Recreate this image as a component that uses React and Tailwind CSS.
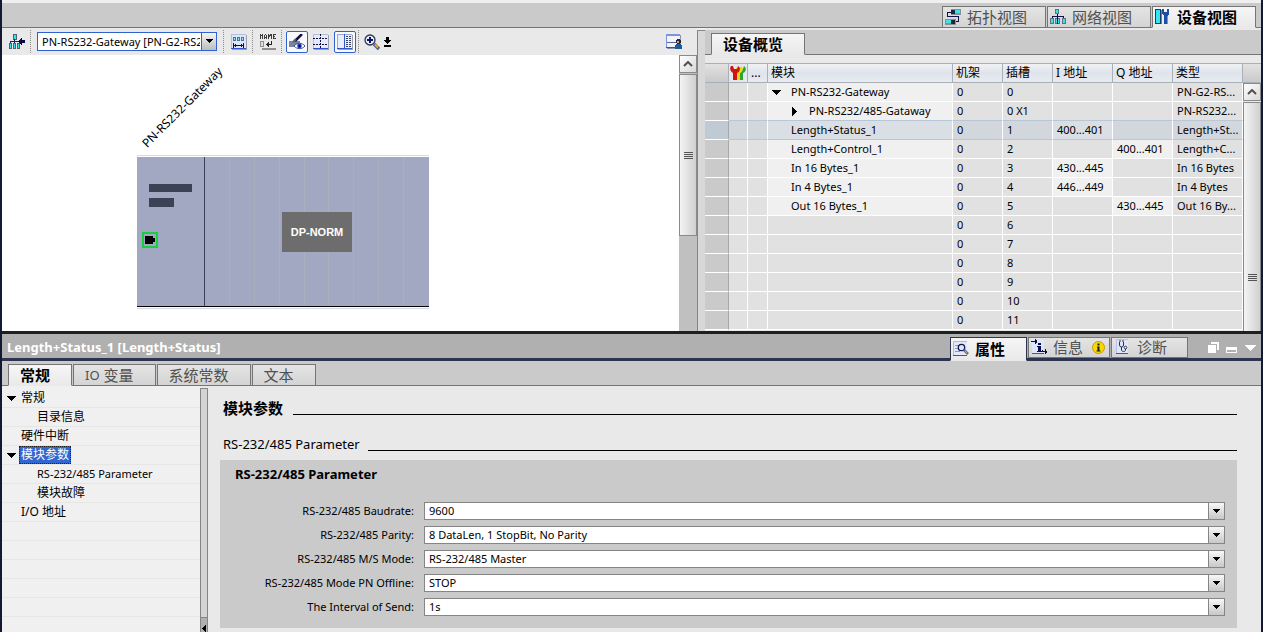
import { useState } from "react";

const devices = [
  { name: "PN-RS232-Gateway", level: 0, open: true, slot: "0", type: "PN-G2-RS..." },
  { name: "PN-RS232/485-Gataway", level: 1, open: false, slot: "0 X1", type: "PN-RS232..." },
  { name: "Length+Status_1", slot: "1", i: "400...401", type: "Length+St..." },
  { name: "Length+Control_1", slot: "2", q: "400...401", type: "Length+C..." },
  { name: "In 16 Bytes_1", slot: "3", i: "430...445", type: "In 16 Bytes" },
  { name: "In 4 Bytes_1", slot: "4", i: "446...449", type: "In 4 Bytes" },
  { name: "Out 16 Bytes_1", slot: "5", q: "430...445", type: "Out 16 By..." },
  { slot: "6" },
  { slot: "7" },
  { slot: "8" },
  { slot: "9" },
  { slot: "10" },
  { slot: "11" },
];

const treeItems = [
  { label: "常规", open: true },
  { label: "目录信息", child: true },
  { label: "硬件中断" },
  { label: "模块参数", open: true },
  { label: "RS-232/485 Parameter", child: true, latin: true },
  { label: "模块故障", child: true },
  { label: "I/O 地址" },
];

const fields = [
  { id: "baudrate", label: "RS-232/485 Baudrate:", options: ["9600", "19200", "38400"] },
  { id: "parity", label: "RS-232/485 Parity:", options: ["8 DataLen, 1 StopBit, No Parity"] },
  { id: "mode", label: "RS-232/485 M/S Mode:", options: ["RS-232/485 Master", "RS-232/485 Slave"] },
  { id: "offline", label: "RS-232/485 Mode PN Offline:", options: ["STOP", "RUN"] },
  { id: "interval", label: "The Interval of Send:", options: ["1s", "2s"] },
];

/* ---------- icons ---------- */

const Svg = ({ w = 16, h = 16, children }) => (
  <svg width={w} height={h} viewBox={`0 0 ${w} ${h}`} className="block shrink-0" shapeRendering="crispEdges" aria-hidden="true">
    {children}
  </svg>
);

const TopologyIcon = () => (
  <Svg>
    <path d="M6 0h10v6H6z" fill="#8a9097" />
    <path d="M6 1h4v4H6z" fill="#1c2b38" />
    <path d="M10 1h5v3h-5z" fill="#3fe0e8" />
    <path d="M0 10h11v6H0z" fill="#8a9097" />
    <path d="M1 11h5v3H1z" fill="#3fe0e8" />
    <path d="M6 11h4v4H6z" fill="#1c2b38" />
    <path d="M2 3h4v1H3v3h11v6h-3v-1h2V8H2z" fill="#12124a" />
  </Svg>
);

const NetworkIcon = () => (
  <Svg>
    <path d="M5 0h4v5H5z" fill="#5d7285" />
    <path d="M6 1h2v3H6z" fill="#3fe0e8" />
    <path d="M7 5h1v5H7zM2 7h12v1H2zM2 7h1v3H2zM13 7h1v3h-1z" fill="#10104a" />
    <path d="M0 9h4v6H0zM5 9h5v6H5zM12 9h4v6h-4z" fill="#5d7285" />
    <path d="M1 10h2v4H1zM6 10h3v4H6zM13 10h2v4h-2z" fill="#3fe0e8" />
    <path d="M7 8h1v7H7z" fill="#10104a" />
  </Svg>
);

const DeviceIcon = () => (
  <Svg>
    <path d="M0 0h6v15H0z" fill="#1b3b6e" />
    <path d="M1 1h4v13H1z" fill="#34e5ee" />
    <path d="M6 1h1v14H6z" fill="#71808f" />
    <path d="M7 0h2v3h3V0h2v5l-2 2v8H9V7L7 5z" fill="#1d4fa8" />
    <path d="M12 7h1v8h-1z" fill="#8094b8" />
  </Svg>
);

const GotoNetworkIcon = () => (
  <Svg>
    <path d="M4 0h4v6H4zM0 9h3v6H0zM4 9h3v6H4zM8 9h3v6H8z" fill="#4d6275" />
    <path d="M5 1h2v4H5zM1 10h1v4H1zM5 10h1v4H5zM9 10h1v4H9z" fill="#3fe0e8" />
    <path d="M1 7h9v1H1zM5 5h1v4H5zM1 7h1v2H1z" fill="#20205a" />
    <path d="M16 6v3h-3v2h-1v-1h-1V9h-1V8H9V7h1V6h1V5h1V4h1v2z" fill="#0a0a4a" />
  </Svg>
);

const AddressIcon = () => (
  <Svg>
    <path d="M1 1h15v15H1z" fill="#9a9fb0" />
    <path d="M0 0h15v14H0z" fill="#dfe5f7" />
    <path d="M0 0h15v1H0zM0 0h1v14H0z" fill="#b3bddd" />
    <path d="M0 14h15v1H0z" fill="#3456cc" />
    <path d="M2 3h3v4H2zM6 3h3v4H6zM10 3h3v4h-3z" fill="#56708c" />
    <path d="M3 4h1v2H3zM7 4h1v2H7zM11 4h1v2h-1z" fill="#7cf0f5" />
    <path d="M3 11h9v1H3zM2 9h1v5H2zM4 10h1v3H4zM12 9h1v5h-1zM10 10h1v3h-1z" fill="#101040" />
  </Svg>
);

const NameIcon = () => (
  <Svg w={17}>
    <path
      d="M0 0h1v5H0zM1 1h1v1H1zM2 0h1v5H2zM4 1h1v4H4zM5 0h1v1H5zM6 1h1v4H6zM5 3h1v1H5zM8 0h1v5H8zM9 1h1v2H9zM10 0h1v2h-1zM11 0h1v5h-1zM13 0h1v5h-1zM14 0h2v1h-2zM14 2h1v1h-1zM14 4h2v1h-2z"
      fill="#3c3c3c"
    />
    <path d="M0 7h4v6H0zM2 14h14v2H2z" fill="#909090" />
    <path d="M1 8h2v4H1z" fill="#e0e0e0" />
    <path d="M11 7h1v4h-1zM6 10h6v1H6zM7 9h1v3H7zM8 8h1v5H8z" fill="#222" />
  </Svg>
);

const LabelEyeIcon = () => (
  <svg width="16" height="16" viewBox="0 0 16 16" className="block" aria-hidden="true">
    <path d="M0 7h11v6H0z" fill="#7c8298" />
    <path d="M6 7L13 0" stroke="#101045" strokeWidth="2.500" />
    <path d="M4 8L7 5" stroke="#5a5f70" strokeWidth="2" />
    <path d="M5 12c3-3.500 8-3.500 11 0c-3 3.500-8 3.500-11 0z" fill="#fff" stroke="#3d4f9c" />
    <circle cx="10.500" cy="12" r="2.300" fill="#1737c4" />
    <circle cx="10.500" cy="12" r="1" fill="#050520" />
  </svg>
);

const GridIcon = () => (
  <Svg>
    <path d="M1 1h15v15H1z" fill="#9a9fb0" />
    <path d="M0 0h15v14H0z" fill="#e6ebfa" />
    <path d="M0 0h15v1H0zM0 0h1v14H0z" fill="#b3bddd" />
    <path d="M0 14h15v1H0z" fill="#3456cc" />
    <path d="M0 4.500h15M0 10.500h15M7.500 0v15" stroke="#101040" strokeDasharray="2 1" />
  </Svg>
);

const TablePaneIcon = () => (
  <Svg>
    <path d="M1 1h15v15H1z" fill="#9a9fb0" />
    <path d="M0 0h15v14H0z" fill="#e9eefb" />
    <path d="M0 0h15v1H0zM0 0h1v14H0z" fill="#9aa8dc" />
    <path d="M0 14h15v1H0zM7 0h1v15H7z" fill="#3456cc" />
    <path d="M9 2h2v1H9zM9 4h2v1H9zM9 6h2v1H9zM9 8h2v1H9zM9 10h2v1H9zM9 12h2v1H9zM12 2h2v1h-2zM12 4h2v1h-2zM12 6h2v1h-2zM12 8h2v1h-2zM12 10h2v1h-2zM12 12h2v1h-2z" fill="#3a4060" />
  </Svg>
);

const ZoomIcon = () => (
  <svg width="16" height="16" viewBox="0 0 16 16" className="block" aria-hidden="true">
    <circle cx="6" cy="6" r="5" fill="#e4eefc" stroke="#2b3358" strokeWidth="1.300" />
    <path d="M6 3v6M3 6h6" stroke="#101060" strokeWidth="2" />
    <path d="M10 10l5 5" stroke="#4b6384" strokeWidth="3.500" />
    <path d="M11 10.500l3 3" stroke="#e8a93a" strokeWidth="2" />
  </svg>
);

const FitIcon = () => (
  <Svg w={7} h={10}>
    <path d="M2 0h3v3h2v1H6v1H5v1H4v1H3V6H2V5H1V4H0V3h2zM0 8h7v2H0z" fill="#000" />
  </Svg>
);

const UserLayoutIcon = () => (
  <Svg>
    <path d="M1 1h14v14H1z" fill="#8d94b0" />
    <path d="M0 0h14v13H0z" fill="#f0f3fc" />
    <path d="M0 0h14v2H0zM0 0h1v13H0z" fill="#7f93e0" />
    <path d="M0 13h14v1H0z" fill="#3450c0" />
    <path d="M1 8h9v1H1z" fill="#5c6690" />
    <path d="M11 5h3v1h1v3h-1v1h-3V9h-1V6h1z" fill="#2a2430" />
    <path d="M11 7h2v2h-2z" fill="#dba36f" />
    <path d="M10 10h5v1h1v4H9v-4h1z" fill="#1d5a9c" />
  </Svg>
);

const WrenchesIcon = () => (
  <svg width="16" height="16" viewBox="0 0 16 16" className="block" aria-hidden="true">
    <path d="M9 2l2 2h2l1-3c3 2 2 6-1 7v7H9z" fill="#28a828" />
    <path d="M6 2l2 2h2l1-3c3 2 2 6-1 7v7H6z" fill="#f5d21a" />
    <path d="M1 1c-2 3 0 6 2 7v7h4V8c3-1 4-5 1-7L7 4H4L3 1z" fill="#d01414" />
  </svg>
);

const PropertiesIcon = () => (
  <svg width="16" height="16" viewBox="0 0 16 16" className="block" aria-hidden="true">
    <path d="M0 0h14v14H0z" fill="#e3e9fa" />
    <path d="M.5 14V.5H14" fill="none" stroke="#aab6e6" />
    <path d="M0 14.500h14" stroke="#3456cc" />
    <path d="M2 4.500h4M2 7.500h4M2 10.500h5" stroke="#8f98b8" />
    <circle cx="8.500" cy="6.500" r="3.200" fill="#dde8fb" stroke="#161650" strokeWidth="1.300" />
    <path d="M11 9l4 4" stroke="#55709a" strokeWidth="2.500" />
    <path d="M12 10l2 2" stroke="#e3b050" />
  </svg>
);

const InfoIcon = () => (
  <Svg>
    <path d="M1 0h12v14H1z" fill="#dfe6fa" />
    <path d="M1 14h12v1H1z" fill="#3456cc" />
    <path d="M0 2h4V0h1v1h1v3H5v1H4V3H0zM7 4h3v2H7zM6 7h4v5h1v1H6v-1h1V8H6zM11 11h1v1h2v-2h1v2h1v2h-1v1h-1v-2h-3z" fill="#0c0c50" />
  </Svg>
);

const DiagnosticsIcon = () => (
  <svg width="13" height="16" viewBox="0 0 13 16" className="block" aria-hidden="true">
    <path d="M0 0h12v14H0z" fill="#dfe6fa" />
    <path d="M.5 14V.5H12" fill="none" stroke="#b4c0ea" />
    <path d="M0 14.500h12" stroke="#3456cc" />
    <path d="M3.500 3v3a2 2 0 0 0 4 0V3M5.500 8v3c0 2 4 2 4 0V9.500" fill="none" stroke="#2a2f52" />
    <circle cx="9.500" cy="8.500" r="1.300" fill="#fff" stroke="#2a2f52" />
    <path d="M3 2h2M6 2h2" stroke="#2a2f52" />
  </svg>
);

const InfoBadge = () => (
  <svg width="13" height="13" viewBox="0 0 13 13" className="block shrink-0" aria-hidden="true">
    <circle cx="6.500" cy="6.500" r="6" fill="#f8d800" stroke="#c79a00" />
    <path d="M5.500 2.500h2v2h-2zM5 5.500h2.500v4H8.500v1H4.500v-1h1v-3H5z" fill="#1c1c1c" />
  </svg>
);

const ArrowDown = ({ w = 9 }) => (
  <Svg w={w} h={5}>
    {w === 9 ? (
      <path d="M0 0h9v1H8v1H7v1H6v1H5v1H4V4H3V3H2V2H1V1H0z" fill="#000" />
    ) : (
      <path d="M0 0h7v1H6v1H5v1H4v1H3V3H2V2H1V1H0z" fill="#000" />
    )}
  </Svg>
);

const ArrowRight = () => (
  <Svg w={5} h={9}>
    <path d="M0 0h1v1h1v1h1v1h1v1h1v1H4v1H3v1H2v1H1v1H0z" fill="#000" />
  </Svg>
);

/* ---------- shared parts ---------- */

const Tab = ({ active, height = "h-[22px]", edge = "border-[#757575]", className = "", children, ...props }) => {
  const look = active
    ? "border-b-[#e9e9e9] bg-linear-to-b from-[#f6f6f6] to-[#e9e9e9] font-bold text-black"
    : "bg-linear-to-b from-[#e4e4e4] to-[#d4d4d4] text-[#505050]";
  return (
    <button type="button" role="tab" aria-selected={!!active} className={`flex items-center border pb-px text-[15px] leading-5 whitespace-nowrap ${height} ${edge} ${look} ${className}`} {...props}>
      {children}
    </button>
  );
};

const Grip = () => (
  <span className="flex w-[9px] flex-col gap-px">
    <i className="h-px bg-[#555]" />
    <i className="h-px bg-[#555]" />
    <i className="h-px bg-[#555]" />
    <i className="h-px bg-[#555]" />
  </span>
);

const ScrollUp = () => (
  <button type="button" aria-label="Scroll up" className="flex h-[18px] w-full shrink-0 items-center justify-center border border-[#8a8a8a] bg-linear-to-br from-white to-[#d8d8d8]">
    <svg width="10" height="6" viewBox="0 0 10 6" aria-hidden="true">
      <path d="M1 5l4-4l4 4" fill="none" stroke="#505050" strokeWidth="2" />
    </svg>
  </button>
);

const Separator = () => <span className="h-[23px] border-l border-dotted border-[#8c8c8c]" />;

const ToolButton = ({ label, pressed, children }) => (
  <button
    type="button"
    aria-label={label}
    aria-pressed={pressed}
    className={`flex h-[22px] w-[22px] shrink-0 items-center justify-center rounded-xs border ${pressed ? "border-[#2f62cf] bg-[#f8f9fd]" : "border-transparent"}`}
  >
    {children}
  </button>
);

/* ---------- panes ---------- */

const Toolbar = () => (
  <div className="flex h-[27px] items-center bg-[#e9e9e9] pl-1">
    <ToolButton label="Network"><GotoNetworkIcon /></ToolButton>
    <div className="ml-[2px] flex"><Separator /></div>
    <div className="relative mx-[6px] w-[180px]">
      <select aria-label="Device" className="block h-[19px] w-full appearance-none overflow-hidden border border-[#2f62cf] bg-white pr-[16px] pl-1 text-[11px] leading-[17px] text-clip">
        <option>PN-RS232-Gateway [PN-G2-RS232]</option>
      </select>
      <span className="pointer-events-none absolute inset-y-px right-px flex w-[15px] items-center justify-center border-l border-[#2f62cf] bg-linear-to-b from-[#f4f4f4] to-[#bdbdbd]">
        <ArrowDown w={7} />
      </span>
    </div>
    <Separator />
    <div className="mr-[2px] ml-1"><ToolButton label="Addresses"><AddressIcon /></ToolButton></div>
    <Separator />
    <div className="mr-[2px] ml-1"><ToolButton label="Name"><NameIcon /></ToolButton></div>
    <Separator />
    <div className="mr-[2px] ml-1 flex gap-[2px]">
      <ToolButton label="Labels" pressed><LabelEyeIcon /></ToolButton>
      <ToolButton label="Grid"><GridIcon /></ToolButton>
      <ToolButton label="Table" pressed><TablePaneIcon /></ToolButton>
    </div>
    <Separator />
    <div className="ml-[2px]"><ToolButton label="Zoom"><ZoomIcon /></ToolButton></div>
    <button type="button" aria-label="Fit" className="flex w-[9px] justify-center"><FitIcon /></button>
    <div className="mr-3 ml-auto"><ToolButton label="Layout"><UserLayoutIcon /></ToolButton></div>
  </div>
);

const DeviceCanvas = () => (
  <div className="relative min-w-0 flex-1 overflow-hidden bg-white">
    <span className="absolute top-[80px] left-[148px] origin-bottom-left -rotate-45 text-[12px] leading-4 whitespace-nowrap">PN-RS232-Gateway</span>
    <div className="absolute top-[100px] left-[135px] w-[292px] border-y border-[#d5dbe6] py-px">
      <div className="relative flex h-[150px] border-b border-black bg-[#a2a8c2]">
        <div className="w-[68px] border-r border-[#3a4256] pt-[27px] pl-3">
          <div className="h-2 w-[43px] bg-[#3a4256]" />
          <div className="mt-[6px] h-[9px] w-[25px] bg-[#3a4256]" />
        </div>
        <div className="grid flex-1 grid-cols-9 divide-x divide-[#aab0bb]">
          {Array.from({ length: 9 }, (_, n) => (
            <div key={n} />
          ))}
        </div>
        <div className="absolute top-[75px] left-[5px] flex h-4 w-4 items-center border-2 border-[#12d040] pl-px">
          <span className="h-2 w-2 bg-black" />
          <span className="h-1 w-[2px] bg-black" />
        </div>
        <div className="absolute top-[55px] left-[145px] flex h-10 w-[70px] items-center justify-center bg-[#6d6d6d] font-['Liberation_Sans'] text-[11px] font-bold text-white">
          DP-NORM
        </div>
      </div>
    </div>
  </div>
);

const headCell = "h-5 border-y border-r border-[#a9b0b8] bg-linear-to-b from-[#f0f1f3] via-[#dfe4ec] to-[#e8ebf0] p-0 pl-[3px] text-left text-[12px] leading-[18px] font-normal whitespace-nowrap";

const OverviewTable = ({ selected, onSelect }) => {
  const cell = (row, filled) => {
    const base = "h-[19px] border-r border-b border-r-white p-0 pl-1 whitespace-nowrap overflow-hidden";
    if (row === selected) return `${base} border-b-[#b9c6d6] ${filled ? "bg-[#d9dfe4]" : "bg-[#d1d7dc]"}`;
    const line = row === selected - 1 ? "border-b-[#b9c6d6]" : "border-b-white";
    return `${base} ${line} ${filled ? "bg-[#f0f0f0]" : "bg-[#e1e1e1]"}`;
  };

  return (
    <table className="w-full table-fixed border-separate border-spacing-0 text-[11px] leading-[18px]">
      <colgroup>
        <col className="w-[24px]" />
        <col className="w-[19px]" />
        <col className="w-[20px]" />
        <col className="w-[185px]" />
        <col className="w-[50px]" />
        <col className="w-[50px]" />
        <col className="w-[60px]" />
        <col className="w-[60px]" />
        <col />
      </colgroup>
      <thead>
        <tr>
          <th className="h-5 border-y border-r border-[#a9b0b8] bg-linear-to-b from-[#e2e2e2] to-[#c9c9c9] p-0" />
          <th className="h-5 border-y border-r border-[#a9b0b8] bg-[#e4e8ee] p-0 pl-px"><WrenchesIcon /></th>
          <th className={headCell}>...</th>
          <th className={headCell}>模块</th>
          <th className={headCell}>机架</th>
          <th className={headCell}>插槽</th>
          <th className={headCell}>I 地址</th>
          <th className={headCell}>Q 地址</th>
          <th className={headCell}>类型</th>
        </tr>
      </thead>
      <tbody>
        {devices.map((d, row) => (
          <tr key={d.slot} onClick={() => onSelect(row)}>
            <td className={`h-[19px] border-r border-b border-r-[#a8a8a8] border-b-white p-0 ${row === selected ? "bg-[#c0cad5]" : "bg-[#cacaca]"}`} />
            <td className={cell(row)} />
            <td className={cell(row)} />
            <td className={cell(row, !!d.name)}>
              <div className={`flex items-center ${d.level ? "pl-[20px]" : ""}`}>
                <span className={d.level ? "w-[17px]" : "w-[19px]"}>
                  {d.open === true && <ArrowDown />}
                  {d.open === false && <ArrowRight />}
                </span>
                {d.name}
              </div>
            </td>
            <td className={cell(row)}>0</td>
            <td className={cell(row)}>{d.slot}</td>
            <td className={cell(row, !!d.i)}>{d.i}</td>
            <td className={cell(row, !!d.q)}>{d.q}</td>
            <td className={cell(row)}>{d.type}</td>
          </tr>
        ))}
      </tbody>
    </table>
  );
};

const Editor = () => {
  const [selected, setSelected] = useState(2);

  return (
    <section>
      <div role="tablist" className="flex items-end justify-end gap-px border-b border-[#757575] bg-[#cacaca] pt-[3px] pr-[5px]">
        <Tab className="-mb-px gap-[6px] pr-[18px] pl-[2px]"><TopologyIcon />拓扑视图</Tab>
        <Tab className="-mb-px gap-[6px] pr-[18px] pl-[2px]"><NetworkIcon />网络视图</Tab>
        <Tab active className="-mb-px gap-[6px] pr-[18px] pl-[2px]"><DeviceIcon />设备视图</Tab>
      </div>

      <div className="flex">
        <div className="flex min-w-0 flex-1 flex-col">
          <Toolbar />
          <div className="flex flex-1">
            <DeviceCanvas />
            <div className="flex w-[18px] flex-col bg-[#c0c0c0]">
              <ScrollUp />
              <div className="mt-px flex h-[162px] items-center justify-center border border-[#8a8a8a] bg-linear-to-r from-[#f4f4f4] to-[#d0d0d0]">
                <Grip />
              </div>
            </div>
          </div>
        </div>

        <div className="mt-[2px] w-2 border-t border-l border-[#858585] bg-[#d8d8d8]" />

        <div className="w-[556px] shrink-0 bg-[#e9e9e9] pt-[2px]">
          <div role="tablist" className="flex border-b border-[#757575] bg-[#cacaca] pt-[3px] pl-[6px]">
            <Tab active className="-mb-px pr-[21px] pl-[11px]">设备概览</Tab>
          </div>
          <div className="flex pt-2">
            <div className="min-w-0 flex-1 pb-px">
              <OverviewTable selected={selected} onSelect={setSelected} />
            </div>
            <div className="flex w-[18px] flex-col">
              <div className="h-5 border-y border-[#a9b0b8] bg-linear-to-b from-[#e2e2e2] to-[#c9c9c9]" />
              <ScrollUp />
              <div className="mt-px flex flex-1 justify-center border-x border-t border-[#8a8a8a] bg-linear-to-r from-[#f4f4f4] to-[#d0d0d0] pt-[171px]">
                <Grip />
              </div>
            </div>
          </div>
        </div>
      </div>
    </section>
  );
};

const ParameterTree = () => (
  <ul className="w-[198px] shrink-0 overflow-hidden bg-[#f0f0f0] pt-[3px]">
    {treeItems.map((item) => (
      <li key={item.label} className={`flex h-[19px] items-center border-b border-[#e6e6e6] pl-[5px] leading-[18px] ${item.latin ? "text-[11px]" : "text-[12px]"}`}>
        <span className={item.child ? "w-[30px]" : "w-[14px]"}>{item.open && <ArrowDown />}</span>
        {item.label === "模块参数" ? (
          <span className="-ml-[2px] border border-dotted border-[#202020] bg-[#2f66d0] px-px leading-4 text-white">{item.label}</span>
        ) : (
          item.label
        )}
      </li>
    ))}
    {Array.from({ length: 6 }, (_, n) => (
      <li key={n} className="h-[19px] border-b border-[#e6e6e6]" />
    ))}
  </ul>
);

const ParameterForm = () => (
  <form className="min-w-0 flex-1 pt-[14px] pr-6 pl-3">
    <div className="flex items-end gap-[10px] pl-[3px]">
      <h2 className="text-[15px] leading-4 font-bold">模块参数</h2>
      <span className="mb-px flex-1 border-b border-black" />
    </div>
    <div className="mt-5 flex items-end gap-[8px] pl-[3px]">
      <h3 className="text-[13px] leading-4">RS-232/485 Parameter</h3>
      <span className="mb-px flex-1 border-b border-black" />
    </div>
    <fieldset className="mt-2 bg-[#cacaca] pt-[6px] pr-3 pb-3">
      <h4 className="pl-[15px] text-[13px] leading-4 font-bold">RS-232/485 Parameter</h4>
      <div className="mt-5 flex flex-col gap-[6px]">
        {fields.map((f) => (
          <div key={f.id} className="flex items-center gap-[10px] text-[11px] leading-4">
            <label htmlFor={f.id} className="w-[194px] shrink-0 text-right">{f.label}</label>
            <div className="relative flex-1">
              <select id={f.id} className="block h-[18px] w-full appearance-none border border-[#858585] bg-white pr-5 pl-1 leading-4">
                {f.options.map((o) => (
                  <option key={o}>{o}</option>
                ))}
              </select>
              <span className="pointer-events-none absolute inset-y-0 right-0 flex w-[17px] items-center justify-center border border-[#858585] bg-linear-to-b from-[#f8f8f8] to-[#c8c8c8]">
                <ArrowDown w={7} />
              </span>
            </div>
          </div>
        ))}
      </div>
    </fieldset>
  </form>
);

const Inspector = () => (
  <section className="flex min-h-0 flex-1 flex-col border-t-3 border-[#1c2020]">
    <header className="flex items-end border-b-3 border-[#2d3450] bg-[#b0b0b0] pt-[3px]">
      <h1 className="flex-1 pb-px pl-[5px] text-[13px] leading-5 font-bold text-white">Length+Status_1 [Length+Status]</h1>
      <div role="tablist" className="flex items-start gap-px">
        <Tab active height="h-[24px]" edge="border-[#2d3450]" className="-mb-[3px] gap-[6px] pr-[21px] pl-[2px]"><PropertiesIcon />属性</Tab>
        <Tab height="h-[21px]" className="gap-[6px] pr-[4px] pl-[2px]"><InfoIcon />信息<span className="pl-[3px]"><InfoBadge /></span></Tab>
        <Tab height="h-[21px]" className="gap-[8px] pr-[20px] pl-[4px]"><DiagnosticsIcon />诊断</Tab>
      </div>
      <div className="mb-[5px] ml-[20px] flex items-center gap-[7px] pr-[5px]">
        <button type="button" aria-label="Float">
          <Svg w={11} h={11}><path d="M3 0h8v8h-2V2H3zM0 3h8v8H0z" fill="#fff" /></Svg>
        </button>
        <button type="button" aria-label="Minimize" className="pt-1">
          <Svg w={11} h={6}><path d="M0 0h11v6H0zM1 3v2h9V3z" fill="#fff" fillRule="evenodd" /></Svg>
        </button>
        <button type="button" aria-label="Collapse">
          <Svg w={12} h={6}><path d="M0 0h12L6 6z" fill="#fff" /></Svg>
        </button>
      </div>
    </header>

    <div role="tablist" className="flex gap-px border-b border-[#757575] bg-[#cacaca] pt-[3px] pl-[6px]">
      <Tab active className="-mb-px pr-[21px] pl-[11px]">常规</Tab>
      <Tab className="-mb-px gap-1 pr-[21px] pl-[11px]"><span className="text-[13px]">IO</span>变量</Tab>
      <Tab className="-mb-px pr-[21px] pl-[11px]">系统常数</Tab>
      <Tab className="-mb-px pr-[21px] pl-[11px]">文本</Tab>
    </div>

    <div className="flex min-h-0 flex-1 bg-[#e9e9e9]">
      <ParameterTree />
      <div className="mt-[2px] flex w-2 flex-col justify-end border-x border-t border-[#858585] bg-[#d4d4d4]">
        <button type="button" aria-label="Hide tree" className="flex h-[15px] items-end justify-center border-t border-[#858585] bg-[#b0b0b0]">
          <Svg w={4} h={7}><path d="M3 0h1v7H3V6H2V5H1V4H0V3h1V2h1V1h1z" fill="#000" /></Svg>
        </button>
      </div>
      <ParameterForm />
    </div>
  </section>
);

const App = () => {
  return (
    <main className="flex h-screen flex-col overflow-hidden border-x-2 border-[#111a30] bg-[#efefef] pt-[3px] font-['Noto_Sans','Noto_Sans_CJK_SC',sans-serif] text-black">
      <Editor />
      <Inspector />
    </main>
  );
};

export default App;
